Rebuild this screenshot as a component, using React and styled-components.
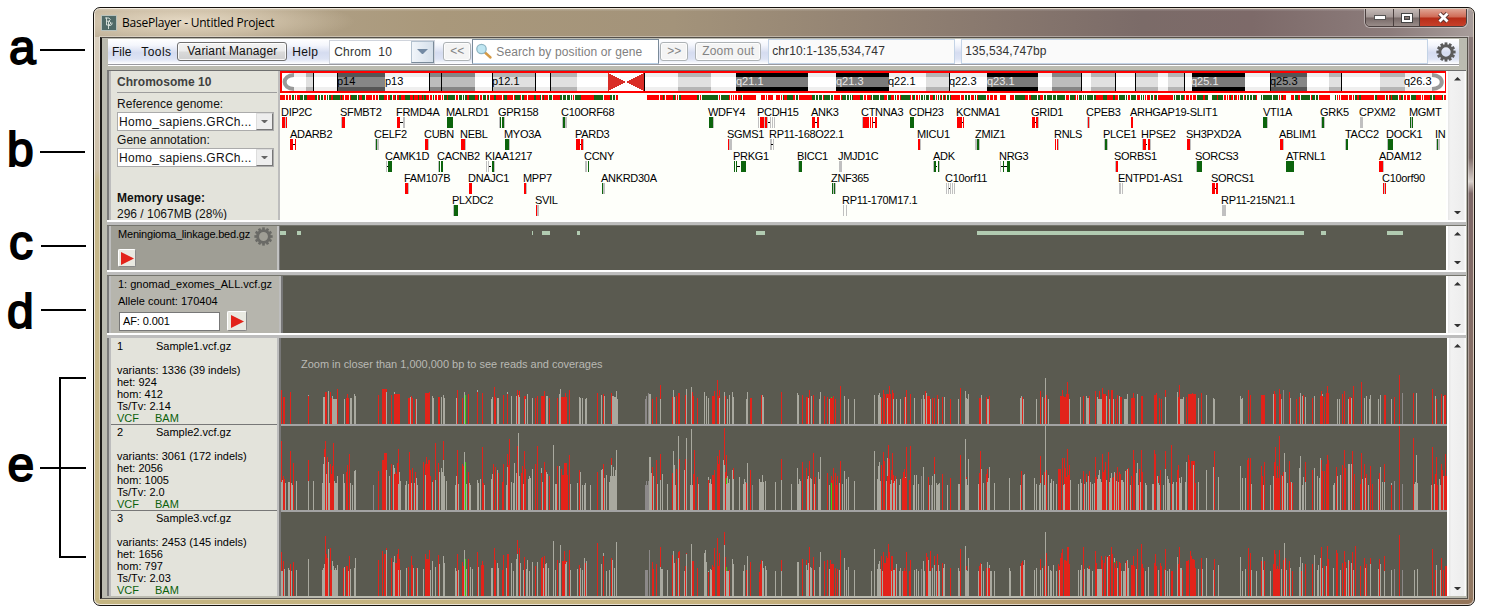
import React from "react";
import styled, { createGlobalStyle } from "styled-components";

const Global = createGlobalStyle`
  * { box-sizing: border-box; }
  body { margin: 0; background: #fff; font-family: "Liberation Sans", Arial, sans-serif; color: #111; overflow: hidden; }
  svg { display: block; flex: none; }
`;

/* ---------- data ---------- */

const GENES = `DIP2C 281 0 r1:3,a4:1,r5:1
SFMBT2 340 0 a1:1,r2:3
FRMD4A 396 0 r1:3,-4:3,a7:2
MALRD1 446 0 g1:6
GPR158 498 0 a1:1,g2:1,g4:2,a6:1
C10ORF68 561 0 a1:1,g2:2,a4:2
WDFY4 708 0 g1:4,a5:1
PCDH15 757 0 a1:1,r3:4,a7:1,r8:2,a10:1,-11:2,a13:1,a15:1,a17:1
ANK3 811 0 r1:3,-4:2,r6:2
CTNNA3 861 0 a1:1,r2:6,r9:1,r11:1,-12:2,r14:2
CDH23 909 0 g1:4
KCNMA1 956 0 r1:5,-6:1,r7:1
GRID1 1031 0 r1:3,-4:1,r5:2,a7:1
CPEB3 1086 0 a1:1,r2:1,a3:1
ARHGAP19-SLIT1 1130 0 r1:2
VTI1A 1263 0 g0:4,a4:1
GRK5 1320 0 a1:1,g2:2,a4:1
CPXM2 1359 0 a1:3
MGMT 1409 0 g1:1,a2:1,g3:1
ADARB2 290 1 r0:3,-3:2,r5:1
CELF2 374 1 a1:1,g2:1,a3:2
CUBN 424 1 r1:3,a4:1
NEBL 460 1 r1:4,a5:1
MYO3A 504 1 g1:4,a5:1
PARD3 575 1 r1:4,-5:1,r6:2,a8:1
SGMS1 727 1 r1:1,a2:3
RP11-168O22.1 769 1 a1:2,-2:2,a4:1
MICU1 917 1 r1:2,a3:1
ZMIZ1 975 1 a0:2,g2:2,a4:1
RNLS 1054 1 r1:1,r3:1,a4:1
PLCE1 1103 1 a1:1,g2:2,a4:1
HPSE2 1141 1 a1:1,r2:3,-5:1,r7:2,a9:1
SH3PXD2A 1186 1 r1:3,a4:1
ABLIM1 1279 1 r1:3,a4:1
TACC2 1345 1 a0:1,g1:2
DOCK1 1386 1 a1:1,g2:5
INPP5A 1435 1 a1:1,g2:1,a3:2
CAMK1D 385 2 a1:1,-2:1,g3:4
CACNB2 437 2 a1:1,g2:1,g4:2
KIAA1217 485 2 a1:1,a3:1,-4:2,g7:2,a9:1
CCNY 584 2 a1:2,g4:1
PRKG1 733 2 g1:1,g3:1,-4:3,g8:5
BICC1 797 2 a1:1,g2:3
JMJD1C 838 2 a1:3
ADK 933 2 a0:1,g1:2,-3:1,g5:1,a6:1
NRG3 999 2 a1:1,-2:2,g4:1,-5:3,g8:3
SORBS1 1114 2 a1:1,r2:2
SORCS3 1195 2 a1:1,g2:5
ATRNL1 1286 2 g0:8
ADAM12 1379 2 r0:4,a4:1
FAM107B 404 3 r1:3,a4:1
DNAJC1 468 3 r1:3
MPP7 523 3 r1:2,a3:1
ANKRD30A 601 3 g1:1,a2:2
ZNF365 831 3 g1:1,a2:1,g3:1,a4:1
C10orf11 945 3 a1:1,a3:1,-4:1,a5:1,a7:1,a9:1
ENTPD1-AS1 1118 3 a1:2,a4:1
SORCS1 1211 3 r1:3,-4:1,r5:2
C10orf90 1382 3 r1:1,a2:1,r3:1
PLXDC2 452 4 a1:1,g2:4
SVIL 535 4 r1:1,a2:2
RP11-170M17.1 842 4 a1:1,a4:1
RP11-215N21.1 1221 4 a1:4`.split("\n").map((l) => {
  const [name, x, row, parts] = l.split(" ");
  return { name, x: +x, row: +row, parts: parts.split(",").map((p) => [p[0], ...p.slice(1).split(":").map(Number)]) };
});

/* [start, end, tone] of every stained band; lines are 1px separators */
const BANDS = [[306,313,"l"],[337,385,"d"],[430,441,"m"],[442,475,"m"],[493,535,"l"],[551,577,"l"],[678,711,"l"],[736,808,"k"],[836,889,"k"],[926,949,"l"],[987,1038,"k"],[1052,1081,"m"],[1091,1115,"l"],[1136,1158,"l"],[1168,1184,"l"],[1192,1245,"k"],[1270,1307,"d"],[1329,1341,"l"],[1380,1405,"l"]];
const TONES = { l: ["#b5b5b5", "#e0e0e0"], m: ["#858585", "#bcbcbc"], d: ["#555", "#868686"], k: ["#000", "#7b7b7b"] };
const BAND_LINES = [313,337,429,441,492,535,550,644,949,1081,1115,1135,1184,1270,1341];
const BAND_LABELS = [["p14",337],["p13",385],["p12.1",492],["q21.1",736,1],["q21.3",836,1],["q22.1",888],["q22.3",949],["q23.1",987,1],["q25.1",1191,1],["q25.3",1270],["q26.3",1404]];

const T1 = "r1:34 r3:27:2 r10:32 r28:28 a28:29 a43:27:2 r45:32:2 a48:33 r50:32 r51:26 a52:28 a53:25:4 r57:35 a64:25 r66:26:3 r67:30 a70:26:2 a74:30 a75:28 r98:29 r102:35:5 a106:32 r111:29 a114:32 r114:30:6 r128:26:2 a130:27 r131:28 r132:26 r135:25 a136:25 r145:31:5 r149:32 a152:28 a153:26 r158:27:2 a161:27 a163:29 a164:26 a176:26 r177:34 r182:26 a184:32 g185:29 r188:30 a197:34 r197:32 r202:31 a211:25 a212:27 r214:37 r215:27 a217:26:2 r223:29 r227:30 a227:32 a231:28 r237:34 a236:28 r239:33 a239:27 a238:29 r244:28:2 a245:25 a247:30 a252:26 r255:26 r257:28 r261:28:3 r264:33 a266:28:2 r269:26 r277:26 a280:35 a279:30 r281:27:6 r285:31 r289:34 a299:27 a300:26 a302:26 a305:25 a306:26 r317:31 a321:29 r323:30 a324:28 r331:31 a332:28:2 a334:27:2 a336:33 a337:25 d365:25:2 d366:28 d368:31 a369:30:2 r372:25 r376:27 r380:39 a380:25 r392:27 a393:34 a394:27 r396:28 r398:31:2 r405:29 a406:35 a411:37 r412:32 r413:28 r417:26 a424:32 a426:28 a428:26 r432:28:3 r434:33 r437:44 r439:34 r438:28 a439:26 a444:32 r445:28 a447:25 a449:29 a452:32 a453:27 a466:25 a467:32 r470:26:2 r481:29 a482:29 a483:27 r501:32 a517:31 a518:29 r522:29 r526:27:2 a528:26 r529:34 a531:28 r533:29 a539:25 a540:32 r544:28 r547:27 a549:25 r550:26:4 g551:27 r553:28 r555:25 r560:38 a564:28 a568:25 a574:25 a594:29 a598:29 a599:31 a600:27 r601:26 r603:34 r604:30 r606:30:5 r609:38 r612:34 r613:31 a607:26 a613:25 a616:25 a620:25 r624:27 a625:27 r626:34 r630:30 a634:26 d641:25 a643:29 a644:25 r645:33 a646:31 r647:28:3 a650:25 r652:26 r654:26 r657:29 a658:25 r662:27 a664:27 r670:25 a678:25 r680:36 a685:33 a686:26 a687:25 a688:30 r699:26:2 a701:29 r706:27 a707:25:2 r709:28 a740:26 a741:28 r742:27 a743:25 a756:25 r760:33 a762:27 r764:26 a765:46 r766:29 a768:25 r780:28:4 r782:34 r784:27:5 r786:30:3 r787:42 a789:25 a800:27 r803:28 a806:28 a807:26:2 r809:28 r815:33 a817:27 a818:25:4 r819:33 r822:36 r823:30:3 a826:28 r828:34 a829:25 r831:34:2 a833:25 r835:25 r837:29 a839:28 r840:27:2 a844:25:3 a847:30 r851:26:4 r853:31 a857:30 r861:28:2 r874:29:3 r876:31 r879:26 r881:25 r885:34 a885:27 a897:32 r898:27 r899:39 a900:25:3 a903:27 r906:27 r908:30:8 r912:31 a918:26 r921:31 a926:29 a933:26 a934:25 a960:28 a961:25 a962:26 r968:34 r970:29 r981:29:4 a993:30 r994:33 r995:30 r999:35 r1000:30 a1001:25 d1003:34 r1009:32 a1010:26 r1016:25 r1019:27 a1020:31 a1022:28 r1023:29 a1025:27 r1032:26 a1034:28 r1041:33 r1040:28:3 a1042:30 r1044:27 r1047:38 r1046:31:3 a1057:25 a1059:25 r1062:30 r1064:33 a1068:25 r1069:27:2 a1071:26 r1073:38 r1081:42 a1084:26 a1086:28 a1089:25 a1090:29 a1098:25 a1100:29 r1104:29:2 a1111:25 r1114:27 r1119:49 d1122:31 r1133:31 a1136:31 r1152:35 a1155:28 r1156:25 r1161:30 a1163:28 r1164:29:2 a1167:25 r1167:34";
const T2 = "r1:69 a1:28:2 r3:34 a2:30 r4:31 r10:59 a8:28:2 a11:27 r13:47 a5:27 a12:25 a16:29 r28:50 a28:29 a33:29 a42:27 a43:46 a44:53 r44:61 r45:69 a46:36 r47:53 a48:48 a49:27 r50:46 r52:44 r53:67 r51:36:3 a54:29 a55:27:2 a57:34 a63:36 a64:27 r66:38 r67:45 r69:56 a70:27 a72:25 a74:39 a75:40 d93:25 r98:39 r102:50 r104:57:3 r103:50 a106:40 a109:34 r111:46 a113:45 a114:42 r115:38 r114:36:5 r117:47 r118:61 a118:26 a119:38 a120:29 a125:25 a126:29 a128:26 r129:58 r130:40 r132:42 a131:27 a134:27 r135:38 a136:32 a137:25 r143:48 r145:46:5 r146:53 r148:50:2 r150:34 a145:35 a152:28 r153:30 r155:67 a155:30 r158:47 a159:38 a161:42 a162:38 r163:69 a163:50 a164:34 a166:29 a175:25 r177:60 a176:34 a178:26 r182:46 r183:44 a184:58 g185:48 a186:26 r188:38 a189:27 a190:25 a197:30 a198:27 a200:31 r202:63 r203:27 a204:25 a211:31 r213:46 a212:36 r215:43 a217:40 r218:37 r222:28 r223:46 a226:25 r227:56 a227:43 r229:71 r228:45 a231:28 a233:27 a234:47 a236:37 r237:64 a238:77 a239:34 r241:37 r242:44 r244:59 r245:41 a243:26 a248:31 a249:34 a250:32 a252:41 r255:46 r257:64 r261:37 a261:42 a262:28 r264:48 r265:40 a266:38 a267:36 r269:34 a273:65 a275:26:2 r277:44 a279:44 r281:41 r282:35:6 r284:47:3 r289:55 a290:26 a297:27 r299:40 a300:38 a302:25 a304:25 a305:27 a310:25 r317:38 a321:40 r323:46 a322:41 a324:32 a326:35 a329:28 a330:34 r331:52 a331:45 a333:43 a332:34 a334:34 a335:40 a336:60 d365:25 d366:29 d367:25 d368:29 a369:53:2 a371:37 r372:43 a373:34 r376:50 a377:26 r380:56 a380:30 a382:36 a387:26 r392:37 a393:59 a394:45 a395:25 r396:41 a398:74 r399:51 a404:40 r405:51 a406:72 a410:25 a411:81 a412:25 r413:36 r414:60 r417:33 a418:26 a428:33 r428:30 a429:27 a430:31 a431:26 r432:35:3 r434:40 r437:54 r439:60 r438:46 a443:50 r444:82 a444:45 r445:38 r446:55 g446:32 a446:26 a447:34 a448:27 a449:31 a452:40 r453:42 a453:31 a459:33 a463:26 a464:31 a465:28 r466:27 a467:47 r470:40 d472:25 a479:31 a480:28:2 a482:35 a483:28 a485:29 a495:28 r501:51 a501:30 a511:26 a517:42 a518:26 a519:31 a520:29 r522:48 r526:42 a527:31 a528:34 r529:49 a530:32 a531:31 r533:57 a534:26 r535:33 a538:38 a539:31 a540:53 r547:37 a549:25 r551:34 g551:27 r552:30 r553:42 r555:37 r557:34 r556:25 a559:27 r560:49 a562:26 a564:39 a566:31 a568:33 a574:29 a594:59 a597:31 a598:44 a599:48 a600:29 r601:45 r603:58 r604:49 a606:29 r607:34 a607:52 r608:65 r609:51 a610:26 a611:30 r611:40 r612:57 r613:35 a613:27 a614:29 r615:34 a616:31 a619:25 a620:31 r622:32:4 r623:38 r624:41 a625:33 r626:63 r629:30 r630:64 a633:25 a634:35 a636:35 a638:26 d641:34 a643:43 r648:33 a649:25 d651:25 a652:34 r654:53 a654:36 a656:27 a657:25 a658:26 a659:27 r662:36 a667:25 r670:32 a678:26 a679:26 r680:55 a685:71 r686:33 a686:31 a687:25 a688:51 a698:26 r699:37 r700:59 a701:41 a703:27 r706:36 r707:41 a707:28 a708:32 a709:43 a714:27 a729:32 a740:25 r741:39 a743:35 a744:36 a754:32 a756:26 a759:25 r760:54 a760:27 a762:35 r764:38 a764:25 a765:84 r766:40 a768:35 a770:27 a771:31 a773:29 a776:26 r778:41:2 r779:28 r780:41 r782:52 r784:52 a783:25 a784:26 r785:42 r786:33:3 r787:61 r788:35 r789:45 a790:30 a798:26 a800:31 a801:27 r803:39 a804:26 r806:36 a806:28 a808:34 r809:39 a810:28 a812:26 a814:27 r815:53 r816:33 a817:31 a818:35 a819:40 a820:31 r822:56 a821:28 r823:38 r824:40 r825:48 a826:30 r828:58 a829:28 a830:32 a831:37 r832:32 r833:33 a834:38 r835:37 r837:43 a836:29 r839:38 r840:36 a838:28 a841:30 a842:30 a843:28 a845:39 r846:40 a847:41 r848:42 a850:25 r851:34 r853:60 r854:50 a856:37 a857:47 r859:41 a858:25 a860:28 r861:60 r862:38 a865:27 a866:25 a872:26 r874:60 r875:56 a873:26 r878:34 r880:40 a877:34 a878:27 a879:25 a883:25 r885:59 a885:41 a887:34 a888:31 a889:27 r891:65 a893:28 a892:26 a896:28 r897:40 r898:45 a899:32 a900:27 a901:33 a905:28 a906:48 r908:55 r909:50 r910:41 r911:49:4 a913:45 r914:38 r915:27 a918:28 a926:40 a933:43 r934:59 a938:33 a960:44 a962:32 a965:32 r967:50 r968:52 r970:52 a971:26 r981:44 r982:34 r984:48 a983:25 a990:25 a993:34 r994:48 r995:63 r996:32:4 r997:44 r999:74 r1001:35 a1002:34 r1003:38 a1004:57 a1005:38 a1007:27 r1009:49 r1010:28 a1011:28 r1012:27 a1019:42 a1020:54 a1022:25 a1023:33 r1025:48 a1025:28 r1032:40 a1034:42 a1037:34 a1039:32 a1040:52 r1041:50 r1042:39 r1044:39 r1046:46 r1047:55 r1048:50 a1053:25 a1054:27 r1056:43 a1057:34 a1060:35 r1062:45 r1064:60 r1065:42 a1068:46:2 a1071:46 r1072:59 r1074:36 r1080:26 r1081:57 r1084:46 a1082:31 a1085:32 r1086:36 a1088:25 r1090:44 r1092:26 a1098:31 r1099:37 a1100:43 a1102:28 r1104:46 a1104:28 a1111:27 r1111:25 d1114:29 r1119:84 d1122:26 r1133:72 a1134:26 a1135:28 a1136:55 a1137:27 a1151:25 r1152:63 r1156:53 r1155:36 a1154:26 r1157:25 a1159:31 r1161:46 r1162:40 a1163:34 a1160:25 r1164:34:3 r1165:56 r1167:65 a1167:49";
const T3 = "r1:44 a1:25:2 r3:35 a4:27 a8:28 r10:32 a9:26 a11:25 r13:34 a16:26 a28:37 a42:26 a43:28 r45:60 a44:32 r46:42 r47:38 a48:47 r50:48 r51:26 a52:35 a53:30 a54:26 a55:28 a56:26 a57:31 r63:28 a64:29 r66:30 r67:30 a68:25 r69:40 a70:27 a74:28 a75:38 r98:36 r102:45 r104:42:2 r106:48 a106:46 r111:38 a113:34 a114:40 r115:33:4 r117:42 r118:47 r119:37 a118:26 a120:26 a126:28 r128:29 r131:40 r132:31 a133:28 r136:28 a137:28 a143:27 r145:42 r146:37:3 r149:46 a150:26 a152:35 a155:29 r158:41 a159:32 a163:40 a164:33 a175:28 a176:25 r177:42 a178:26 r182:34 r183:30 a184:46 g185:37 a186:27 r188:37 a190:29 a192:27 r197:44 a198:29 r201:31:3 r202:35 a211:28:2 r214:48 r215:36 a217:33 a218:28 r222:26 r223:41 a226:28 r227:42 r228:42 a231:33 a233:25 r237:56 a236:37 a237:42 r239:48 a240:33 r244:39 a243:26 a246:27 a247:36 a249:25 a252:34 r255:30 a257:34 r261:38 r262:39 a263:28 r264:40 a265:32 a266:33 a268:28 a273:55 a275:26 r277:36 a280:51 a279:33 r282:35:5 r284:45 a285:32 a286:34 r289:46 a290:26 a297:27 r299:31 a300:28 a302:26 a304:38 r305:33 a306:35 r317:53 a321:32 a323:43 r323:40 a326:25 a329:26 r331:38 a332:36 a334:28 a336:54 d365:26:3 d369:46 r372:34 r373:27 r376:32 r380:49 a380:29 a381:27:2 a387:26 r392:41 a393:45 a394:33 r396:37 r398:44 r399:45 a398:38 a404:25 r405:30 r406:43 a406:42 a411:52 r412:35:2 r417:28 a424:43 a425:46 a426:34 a428:25 r428:24 a430:27 a431:26 r432:31 r433:29 r434:48 r437:58 r438:30 r439:43 r444:64 a444:51 r445:39 g446:29 a446:25:2 a448:25 r449:26 a452:37 a453:32 a463:25 a464:31 r466:26 a467:40 r470:34 r479:24 r480:32 r481:36 a482:35 a483:28 a485:30 a486:26 a495:25 r501:36 a501:25 a517:34:2 r522:37 r526:36 a526:31 a527:26 a528:33 r529:49 a530:29 a531:28 r533:39 a534:26 a539:29 a540:44 r544:35 r547:36 a549:27 r550:36 r551:32:3 r555:28 r557:27 a559:26 r560:46 a564:38 a566:26 a568:29 a574:26 a591:25 a594:47 a597:27 a598:32 a599:35 a600:27 r601:40 a602:25 r603:44 r604:33:2 r606:40 r607:38 r608:52 r609:44 r610:26 r611:40:2 a611:25 a613:26:2 r615:28 a616:32 a619:25 a620:28 d622:25 r623:25:4 r624:28 r626:44 r629:25 r630:36 a634:26 a636:27 a638:25 d641:27 a643:35 a644:25 r646:43 r647:39 a648:36 r650:45 a649:25:2 r652:29 a652:28 r654:40 a654:31 a656:25 r657:42 a658:31 a659:25 r662:33 a664:32 a663:28 r670:28 a678:28 a679:25 r680:47 a685:50 r686:30 a686:26 a687:25 a688:38 a698:25 r699:30 r700:33 a701:32 a703:25 r706:28 a707:34 r708:28:2 a709:31 a710:25:2 a714:25 a729:28 a730:25 a740:30 r741:33 r742:35 a743:31 a744:36 a754:26 a756:28 r760:37 a760:26 a762:28 r764:30 a765:64 r766:43 a768:30 a770:26 a771:25 a773:31 a776:25 r778:32 a779:26 r780:38 r781:43 r782:47 r779:30 r784:36:2 r786:35 r787:49:2 r789:32 a798:26 a800:26 a801:31 r803:49 a804:27 a807:28 a808:27:2 r809:30 a812:25 r815:45 a817:27:5 r816:33 r821:40 r822:36 r824:33 r825:40 a827:39 a829:41 r828:40:2 r831:49 r832:42 a834:38 g834:34 r834:33 r835:28 r836:35 a837:28 r839:34 r840:33 a841:25 a843:25:2 a845:33 r846:35 a847:36 a848:28 r851:31:2 r853:40 r854:30 a856:27 r857:47 r861:52 r862:32 r863:28 a865:25 a868:29 r874:33 r875:42 r876:30 r880:33 r881:30 a878:26 r884:27 r885:47 a885:26 a887:25 a889:27 r891:25:2 a897:39 r898:32 r899:49 a900:28 a901:28 r902:26 r906:35:2 r908:36 r910:45 r911:40 r912:37:2 r914:36 r915:28 a918:27 r921:38 a922:27 a926:38 a933:26 r934:37 a938:31 a960:39 a962:25 a965:27 r968:48 r970:43 a971:26 a976:25 r981:35 a982:39 r984:35 a983:26 a990:25 r993:32 r994:46 r995:42 r997:30 r999:46 r996:27:4 a1001:27 r1003:36 a1004:53 r1005:38 a1006:26 r1009:35 a1010:28 r1012:25 a1019:29 a1020:39 r1021:25 a1022:33 r1025:32 r1032:32 a1034:41 a1037:26 a1038:31 a1040:38 r1041:49 a1042:28 r1044:30 r1047:50 r1048:37 a1046:30 a1053:28 r1056:46 r1057:43 a1060:26 r1062:33 r1064:45 r1065:34 a1066:28 a1068:36 r1069:35 r1072:44 a1071:33 r1075:50 a1073:26 r1080:30 r1084:38 r1086:32 a1085:28 r1090:38 a1090:32 a1098:27 r1099:37 a1100:32 r1104:40 a1104:25 a1111:26 d1114:27 d1122:26 r1119:61 a1134:26 a1137:27 r1152:47 a1156:31 r1155:26 a1160:26 r1161:38 r1163:26 r1165:30:2 r1167:39 a1167:30";

const parseBars = (s) =>
  s.split(" ").map((t) => {
    const [x, h, w = 1] = t.slice(1).split(":").map(Number);
    return { c: t[0], x, h, w };
  }).sort((p, q) => q.h - p.h);

const SAMPLES = [
  { id: 1, file: "Sample1.vcf.gz", variants: "1336 (39 indels)", het: "924", hom: "412", tstv: "2.14", bars: parseBars(T1) },
  { id: 2, file: "Sample2.vcf.gz", variants: "3061 (172 indels)", het: "2056", hom: "1005", tstv: "2.0", bars: parseBars(T2) },
  { id: 3, file: "Sample3.vcf.gz", variants: "2453 (145 indels)", het: "1656", hom: "797", tstv: "2.03", bars: parseBars(T3) },
];
const BAR_COLORS = { r: "#e2231a", a: "#a9a99f", d: "#8c8989", g: "#3bd112" };

/* stripes of the gene density line */
const DENSITY_GAPS = [[617, 647], [995, 1000], [1005, 1010], [1330, 1335], [1209, 1212], [1257, 1261], [1285, 1291], [440, 441], [757, 761], [773, 776]];
const DENSITY = (() => {
  const out = [];
  let seed = 4711;
  const rnd = () => ((seed = (seed * 1103515245 + 12345) % 2147483648) / 2147483648);
  for (let x = 280; x < 1446; ) {
    const gap = DENSITY_GAPS.find(([a, b]) => x >= a && x < b);
    if (gap) { x = gap[1]; continue; }
    const r = rnd();
    const w = r < 0.45 ? 1 : r < 0.75 ? 2 : r < 0.9 ? 3 : 6;
    out.push([x - 280, Math.min(w, 1446 - x), rnd() < 0.54 ? "#f00" : "#146414"]);
    x += w + (rnd() < 0.42 ? 1 : 0);
  }
  return out;
})();

/* ---------- shell ---------- */

const Page = styled.main`
  width: 1486px; height: 613px; display: flex; background: #fff;
`;
const Gutter = styled.svg`
  width: 93px; height: 613px;
  text { font: 48px "Liberation Sans", Arial, sans-serif; stroke: #000; stroke-width: 1.8px; }
  path { fill: none; stroke: #000; stroke-width: 2px; }
`;
const Frame = styled.section`
  margin-top: 7px; width: 1382px; height: 599px;
  border: 1px solid #16130f; border-radius: 7px;
  padding: 1px;
  background: linear-gradient(100deg, #f3ecdf, #e8e0d2 50%, #d9cbbf);
`;
const Chrome = styled.div`
  height: 100%; border-radius: 5px; overflow: hidden; padding: 0 5px 5px 5px;
  display: flex; flex-direction: column;
  background:
    linear-gradient(90deg, #c4b582, #c6b27e 45%, #a8895f 80%, #937459) bottom / 100% 6px no-repeat,
    linear-gradient(#dcd3c4, #cdbfa8 27%, #c7b88b 29%, #c7b785) left / 6px 100% no-repeat,
    linear-gradient(#8a7b7b, #7f6b68 25%, #d8d0cc 29%, #7e6868 31%, #927963) right / 6px 100% no-repeat,
    #a8987c;
`;
const TitleBar = styled.header`
  height: 28px; margin: 0 -5px; padding: 0 0 0 6px; flex: none;
  display: flex; align-items: center;
  background:
    radial-gradient(ellipse 170px 24px at 90px 12px, rgba(238,226,206,.85), rgba(228,214,190,.5) 55%, transparent),
    linear-gradient(rgba(255,255,255,.25), transparent 8%, transparent),
    linear-gradient(90deg, #b8aa92, #a9987b 25%, #a3937a 42%, #8c7c70 62%, #7b6b68 76%, #7d6a69 84%, #8c7c7b 94%, #a79c9a);
`;
const Title = styled.h1`
  margin: -2px auto 0 5px; font: 12px "Open Sans", "Noto Sans", sans-serif; letter-spacing: -0.22px; color: #000; white-space: nowrap;
`;
const Controls = styled.div`
  align-self: flex-start; display: flex; margin: -1px 6px 0 0; height: 19px;
  border: 1px solid #4a3f3e; border-radius: 0 0 5px 5px; overflow: hidden; box-shadow: 0 0 0 1px rgba(255,255,255,.4);
`;
const Control = styled.button`
  all: unset; box-sizing: border-box; width: ${(p) => p.$w}px; display: flex; align-items: center; justify-content: center;
  background: ${(p) => p.$close
    ? "linear-gradient(#e0a595, #cf6a55 48%, #b52d18 52%, #c8402a)"
    : "linear-gradient(#c4bab7, #a39795 48%, #766866 52%, #998c89)"};
  & + & { border-left: 1px solid #4a3f3e; }
`;
const Client = styled.div`
  flex: 1; min-height: 0; border: 1px solid #55504a; border-left: 2px solid #1c1a18; outline: 1px solid rgba(255,255,255,.35);
  padding: 1px 0 0 6px; background: #bbbbb0; display: flex; flex-direction: column;
  border-bottom: 1px solid #55524c;
`;

/* ---------- toolbar ---------- */

const Toolbar = styled.nav`
  width: 1351px; height: 25px; flex: none; display: flex; align-items: center;
  background: linear-gradient(#fff, #f4f6fc 25%, #d5dcf0 55%, #dde3f4 80%, #fff);
`;
const MenuItem = styled.span`
  font-size: 12px; letter-spacing: ${(p) => p.$ls ?? 0}px; color: #111; margin-left: ${(p) => p.$ml}px; white-space: nowrap;
`;
const ToolButton = styled.button`
  all: unset; box-sizing: border-box; height: 19px; width: ${(p) => p.$w}px; margin-left: ${(p) => p.$ml ?? 0}px; text-align: center;
  font-size: 12px; line-height: 17px; white-space: nowrap; letter-spacing: ${(p) => p.$ls ?? 0}px;
  border: 1px solid ${(p) => (p.$muted ? "#adb2b5" : "#707070")}; border-radius: 3px;
  color: ${(p) => (p.$muted ? "#838383" : "#111")};
  background: ${(p) => (p.$muted ? "#f4f4f4" : "linear-gradient(#f2f2f2, #ebebeb 48%, #dadada 52%, #cfcfcf)")};
  box-shadow: inset 0 0 0 1px rgba(255,255,255,.8);
`;
const ChromSelect = styled.div`
  width: 106px; height: 24px; margin-left: 11px; display: flex; align-items: center; justify-content: space-between;
  background: #fff; border: 1px solid #d0d4dc; font-size: 12px; letter-spacing: 0.2px; color: #333; padding-left: 4px; white-space: pre;
`;
const ArrowBox = styled.span`
  width: ${(p) => p.$w}px; height: 100%; display: flex; align-items: center; justify-content: center;
  background: ${(p) => (p.$plain ? "#eee" : "linear-gradient(90deg, #f1f5fa, #d5dfea)")};
  border: 1px solid ${(p) => (p.$plain ? "#ddd" : "#b3c1cf")}; border-right-color: ${(p) => (p.$plain ? "#777" : "#7a8a99")}; border-bottom-color: ${(p) => (p.$plain ? "#777" : "#7a8a99")};
`;
const Search = styled.div`
  width: 187px; height: 25px; margin-left: 1px; display: flex; align-items: center; gap: 3px; padding-left: 2px;
  background: #fff; border: 1px solid #7a8a99; border-bottom-color: #b8cfe5; font-size: 12px; color: #808080; letter-spacing: 0.13px; white-space: nowrap;
`;
const Readout = styled.div`
  width: ${(p) => p.$w}px; height: 25px; margin-left: ${(p) => p.$ml}px; padding-left: 3px; line-height: 23px;
  font-size: 12px; color: #333; background: #fafafa; border: 1px solid #c3d3e6; letter-spacing: ${(p) => p.$ls}px;
`;
const GearSlot = styled.div`
  flex: 1; display: flex; justify-content: center; padding-left: 4px;
`;
const ToolbarEdge = styled.div`
  height: 6px; width: 1351px; flex: none; border-top: 1px solid #9a9aa0; box-shadow: inset 0 1px #fff;
`;

/* ---------- panes ---------- */

const Pane = styled.section`
  height: ${(p) => p.$h}px; flex: none; margin-left: -1px; width: 1359px; display: flex; background: #fff;
  border-top: ${(p) => (p.$first ? 1 : 0)}px solid #6f6f6f; border-left: 2px solid #7b7b7b;
`;
const Divider = styled.div`
  height: ${(p) => p.$h ?? 6}px; flex: none; margin-left: -1px; width: 1359px;
  background: linear-gradient(#fff 0 2px, #bdbdbd 2px 5px, #74746c 5px);
`;
const Side = styled.aside`
  width: ${(p) => p.$w}px; flex: none; background: ${(p) => p.$bg}; border-left: 2px solid #bdbdbd; border-right: 2px solid ${(p) => p.$edge ?? "#bdbdbd"};
  padding: ${(p) => p.$pad}; white-space: nowrap; overflow: hidden;
`;
const Canvas = styled.div`
  width: ${(p) => p.$w}px; flex: none; background: ${(p) => p.$bg ?? "#5a5a50"}; border-left: ${(p) => p.$edge ?? 1}px solid #777; overflow: hidden;
`;
const Scroll = styled.div`
  flex: 1; margin-left: 2px; background: linear-gradient(90deg, #e6e6e6, #f2f2f2 15%, #ededed 85%, #fff); display: flex; flex-direction: column;
  justify-content: space-between; align-items: center; padding: 6px 0 6px;
`;
const Heading = styled.h2`
  margin: 0 -1px 4px 0; padding-bottom: 2px; border-bottom: 1px solid #9d9d9d; font-size: 12px; line-height: 16px; color: #404040; letter-spacing: 0.04px;
`;
const FieldLabel = styled.div`
  font-size: 12px; line-height: 14px; letter-spacing: 0.05px;
`;
const Combo = styled.div`
  height: 19px; width: 157px; margin: 1px 0 2px; background: #fff; border: 1px solid #ababab; display: flex; justify-content: space-between;
  font-size: 12px; line-height: 18px; padding-left: 1px; letter-spacing: 0.3px;
`;
const Memory = styled.div`
  margin-top: 23px; font-size: 12px; line-height: 16px; letter-spacing: 0;
`;
const Small = styled.div`
  font-size: 11px; line-height: ${(p) => p.$lh ?? 12}px; letter-spacing: ${(p) => p.$ls ?? 0}px; color: #000;
`;
const Spread = styled.div`
  display: flex; justify-content: space-between; align-items: flex-start; margin-bottom: 3px;
`;
const PlayButton = styled.button`
  all: unset; box-sizing: border-box; width: ${(p) => p.$s}px; height: ${(p) => p.$s}px; background: #e9e9e1; border: 1px solid #fff; border-right-color: #888; border-bottom-color: #888; border-radius: 2px;
  display: flex; align-items: center; justify-content: center;
`;
const FilterRow = styled.div`
  display: flex; align-items: center; gap: 7px; margin-top: 1px; padding-left: 1px;
`;
const FilterInput = styled.div`
  width: 101px; height: 19px; border: 1px solid #777; background: #fff; font-size: 11px; line-height: 16px; padding-left: 3px; color: #000; letter-spacing: -0.1px;
`;
const SampleSide = styled.div`
  height: ${(p) => (p.$first ? 87 : 86)}px; padding: ${(p) => (p.$first ? 2 : 1)}px 0 0 6px; border-bottom: ${(p) => (p.$last ? 0 : 1)}px solid #777; color: #000;
`;
const SampleHead = styled(Small)`
  display: grid; grid-template-columns: 39px 1fr; margin-bottom: 12px;
`;
const Files = styled(Small)`
  display: flex; gap: 16px; color: #0b610b;
`;
const Track = styled.div`
  border-bottom: ${(p) => (p.$last ? 0 : 2)}px solid #a3a3a3;
`;

const GeneSvg = styled.svg`
  text { font: 11px "Liberation Sans", Arial, sans-serif; letter-spacing: -0.3px; fill: #000; }
`;

/* ---------- drawings ---------- */

const Gear = ({ s, color }) => (
  <svg width={s} height={s} viewBox="-10 -10 20 20">
    {Array.from({ length: 12 }, (_, i) => (
      <rect key={i} x="-1.4" y="-9.6" width="2.8" height="4" fill={color} transform={`rotate(${i * 30})`} />
    ))}
    <circle r="6.2" fill="none" stroke={color} strokeWidth="3" />
  </svg>
);
const Play = ({ w = 13 }) => (
  <svg width={w} height="13" viewBox="0 0 13 13"><path d="M0 0L13 6.5L0 13Z" fill="#e2231a" /></svg>
);
const Arrow = ({ up, w = 8, c = "#333" }) => (
  <svg width={w} height={w / 2} viewBox="0 0 8 4"><path d={up ? "M0 4L4 0L8 4Z" : "M0 0L8 0L4 4Z"} fill={c} /></svg>
);
const ScrollBar = () => (<Scroll><Arrow up w={7} /><Arrow w={7} /></Scroll>);

const Annotations = () => (
  <Gutter viewBox="0 0 93 613">
    <text x="9" y="63.5">a</text><text x="7" y="166">b</text><text x="9" y="259">c</text><text x="7" y="327.5">d</text><text x="7.5" y="481">e</text>
    <path d="M40 50H85M40 152H85M41 246H86M41 310H86M40 468H86M86 378H60V557H86" />
  </Gutter>
);

const Ideogram = () => (
  <g>
    <rect x="1" y="1" width="1165" height="20" fill="#fff" stroke="#f00" strokeWidth="2" />
    <path d="M12 2H1154V6H12ZM12 16H1154V20H12Z" fill="#efefef" />
    {BANDS.map(([a, b, t]) => (
      <g key={a}>
        <rect x={a - 280} y="2" width={b - a} height="18" fill={TONES[t][0]} />
        <rect x={a - 280} y="6" width={b - a} height="10" fill={TONES[t][1]} />
      </g>
    ))}
    {BAND_LINES.map((x) => <rect key={x} x={x - 280} y="2" width="1" height="18" fill="#000" />)}
    <path d="M14 4C1.5 4 1.5 18 14 18M1152 4C1165 4 1165 18 1152 18" fill="none" stroke="#999" strokeWidth="4" shapeRendering="auto" />
    <rect x="328" y="2" width="36" height="18" fill="#fff" />
    <path d="M328 2L346 11L328 20ZM364 2L346 11L364 20Z" fill="#d92d27" />
    {BAND_LABELS.map(([t, x, inv]) => <text key={t} x={x - 280} y="14" style={{ fill: inv ? "#e8e8e8" : "#000", letterSpacing: 0 }}>{t}</text>)}
  </g>
);

const FILL = { r: "#f00", g: "#0c640c", a: "#c0c0c0" };
const GeneMap = () => (
  <GeneSvg width="1166" height="149" viewBox="0 0 1166 149" shapeRendering="crispEdges">
    <Ideogram />
    {DENSITY.map(([x, w, c]) => <rect key={x} x={x} y="24" width={w} height="5" fill={c} />)}
    {GENES.map((g) => (
      <g key={g.name} transform={`translate(${g.x - 280} ${g.row * 22})`}>
        <text x="0" y="45">{g.name}</text>
        {g.parts.map(([c, x, w]) => c === "-"
          ? <rect key={c + x} x={x} y="51" width={w} height="1" fill="#000" />
          : <rect key={c + x} x={x} y="46" width={w} height="11" fill={FILL[c]} />)}
      </g>
    ))}
  </GeneSvg>
);

const LINKAGE = [[280, 6], [297, 4], [532, 1], [542, 8], [577, 3], [756, 9], [977, 327], [1321, 5], [1387, 16]];
const Linkage = () => (
  <svg width="1167" height="44">
    {LINKAGE.map(([x, w]) => <rect key={x} x={x - 280} y="5" width={w} height="4" fill="#b1cbb1" />)}
  </svg>
);

const VariantTrack = ({ sample, h, last }) => (
  <Track $last={last}>
    <svg width="1167" height={h} viewBox={`1 0 1167 ${h}`} shapeRendering="crispEdges">
      {sample.bars.map((b, i) => <rect key={i} x={b.x} y={h - b.h} width={b.w} height={b.h} fill={BAR_COLORS[b.c]} />)}
      {sample.id === 1 && <text x="21" y="30" fontSize="11" fill="#b9b9b4" letterSpacing="-0.02" fontFamily="Liberation Sans, Arial, sans-serif">Zoom in closer than 1,000,000 bp to see reads and coverages</text>}
    </svg>
  </Track>
);

export default function App() {
  return (
    <Page>
      <Global />
      <Annotations />
      <Frame>
        <Chrome>
          <TitleBar>
            <svg width="16" height="16" viewBox="0 0 16 16">
              <rect width="16" height="16" fill="#b9c2bc" /><rect x="1" y="1" width="14" height="14" fill="#4f6967" />
              <path d="M5.5 2.5V10M4 3H8Q10.5 4.5 8 6.2H5.5M8 6.2Q11.5 8 8 10H5.5M7.5 14V6.5M7.5 10.5Q11.5 11 11 7.5" fill="none" stroke="#dfe7e1" strokeWidth="0.9" />
            </svg>
            <Title>BasePlayer - Untitled Project</Title>
            <Controls>
              <Control $w={27}><svg width="12" height="5"><rect x=".5" y=".5" width="11" height="4" fill="#fff" stroke="#555" /></svg></Control>
              <Control $w={26}><svg width="12" height="10"><rect x="2" y="2" width="8" height="6" fill="none" stroke="#444" strokeWidth="4" /><rect x="2" y="2" width="8" height="6" fill="none" stroke="#fff" strokeWidth="2" /></svg></Control>
              <Control $w={47} $close><svg width="13" height="11" viewBox="0 0 13 11"><path d="M2.5 1.5L10.5 9.5M10.5 1.5L2.5 9.5" stroke="#5a3430" strokeWidth="4.6" /><path d="M2.5 1.5L10.5 9.5M10.5 1.5L2.5 9.5" stroke="#fff" strokeWidth="2.8" /></svg></Control>
            </Controls>
          </TitleBar>
          <Client>
            <Toolbar>
              <MenuItem $ml={4}>File</MenuItem>
              <MenuItem $ml={10} $ls={0.4}>Tools</MenuItem>
              <ToolButton $w={110} $ml={6} $ls={0.15}>Variant Manager</ToolButton>
              <MenuItem $ml={5} $ls={0.3}>Help</MenuItem>
              <ChromSelect>Chrom  10<ArrowBox $w={23}><Arrow w={11} c="#7389a3" /></ArrowBox></ChromSelect>
              <ToolButton $w={28} $ml={8} $muted>&lt;&lt;</ToolButton>
              <Search>
                <svg width="18" height="17" viewBox="0 0 18 17">
                  <path d="M10 9.5L15.5 14.5" stroke="#d59a45" strokeWidth="2.4" strokeLinecap="round" />
                  <circle cx="6.5" cy="6" r="4.7" fill="#bfe6f2" stroke="#8fb6c4" strokeWidth="1.3" />
                </svg>
                Search by position or gene
              </Search>
              <ToolButton $w={28} $ml={1} $muted>&gt;&gt;</ToolButton>
              <ToolButton $w={66} $ml={7} $muted $ls={0.15}>Zoom out</ToolButton>
              <Readout $w={187} $ml={7} $ls={0.1}>chr10:1-135,534,747</Readout>
              <Readout $w={467} $ml={6} $ls={0.1}>135,534,747bp</Readout>
              <GearSlot><Gear s={20} color="#5c5c5c" /></GearSlot>
            </Toolbar>
            <ToolbarEdge />
            <Pane $h={150} $first>
              <Side $w={171} $bg="#e3e3db" $pad="3px 2px 0 6px">
                <Heading>Chromosome 10</Heading>
                <FieldLabel>Reference genome:</FieldLabel>
                <Combo>Homo_sapiens.GRCh...<ArrowBox $w={17} $plain><Arrow w={7} c="#666" /></ArrowBox></Combo>
                <FieldLabel>Gene annotation:</FieldLabel>
                <Combo>Homo_sapiens.GRCh...<ArrowBox $w={17} $plain><Arrow w={7} c="#666" /></ArrowBox></Combo>
                <Memory><b>Memory usage:</b><br />296 / 1067MB (28%)</Memory>
              </Side>
              <Canvas $w={1166} $bg="#fefffa" $edge={0}><GeneMap /></Canvas>
              <ScrollBar />
            </Pane>
            <Divider />
            <Pane $h={44}>
              <Side $w={170} $bg="#9f9e95" $pad="1px 4px 0 7px" $edge="#c2c2c2">
                <Spread><Small $lh={14} $ls={-0.2}>Meningioma_linkage.bed.gz</Small><Gear s={19} color="#6a6a66" /></Spread>
                <PlayButton $s={18}><Play w={13} /></PlayButton>
              </Side>
              <Canvas $w={1167}><Linkage /></Canvas>
              <ScrollBar />
            </Pane>
            <Divider />
            <Pane $h={57}>
              <Side $w={172} $bg="#b6b5ad" $pad="0 2px 0 7px">
                <Small $lh={16}>1: gnomad_exomes_ALL.vcf.gz</Small>
                <Small $lh={18}>Allele count: 170404</Small>
                <FilterRow><FilterInput>AF: 0.001</FilterInput><PlayButton $s={20}><Play w={13} /></PlayButton></FilterRow>
              </Side>
              <Canvas $w={1165} $edge={2} />
              <ScrollBar />
            </Pane>
            <Divider $h={5} />
            <Pane $h={258}>
              <Side $w={170} $bg="#e3e3db" $pad="0">
                {SAMPLES.map((s) => (
                  <SampleSide key={s.id} $first={s.id === 1} $last={s.id === 3}>
                    <SampleHead><span>{s.id}</span><span>{s.file}</span></SampleHead>
                    <Small>variants: {s.variants}</Small>
                    <Small>het: {s.het}</Small>
                    <Small>hom: {s.hom}</Small>
                    <Small>Ts/Tv: {s.tstv}</Small>
                    <Files><span>VCF</span><span>BAM</span></Files>
                  </SampleSide>
                ))}
              </Side>
              <Canvas $w={1168} $edge={2}>
                {SAMPLES.map((s) => <VariantTrack key={s.id} sample={s} h={s.id === 1 ? 86 : 84} last={s.id === 3} />)}
              </Canvas>
              <ScrollBar />
            </Pane>
          </Client>
        </Chrome>
      </Frame>
    </Page>
  );
}
